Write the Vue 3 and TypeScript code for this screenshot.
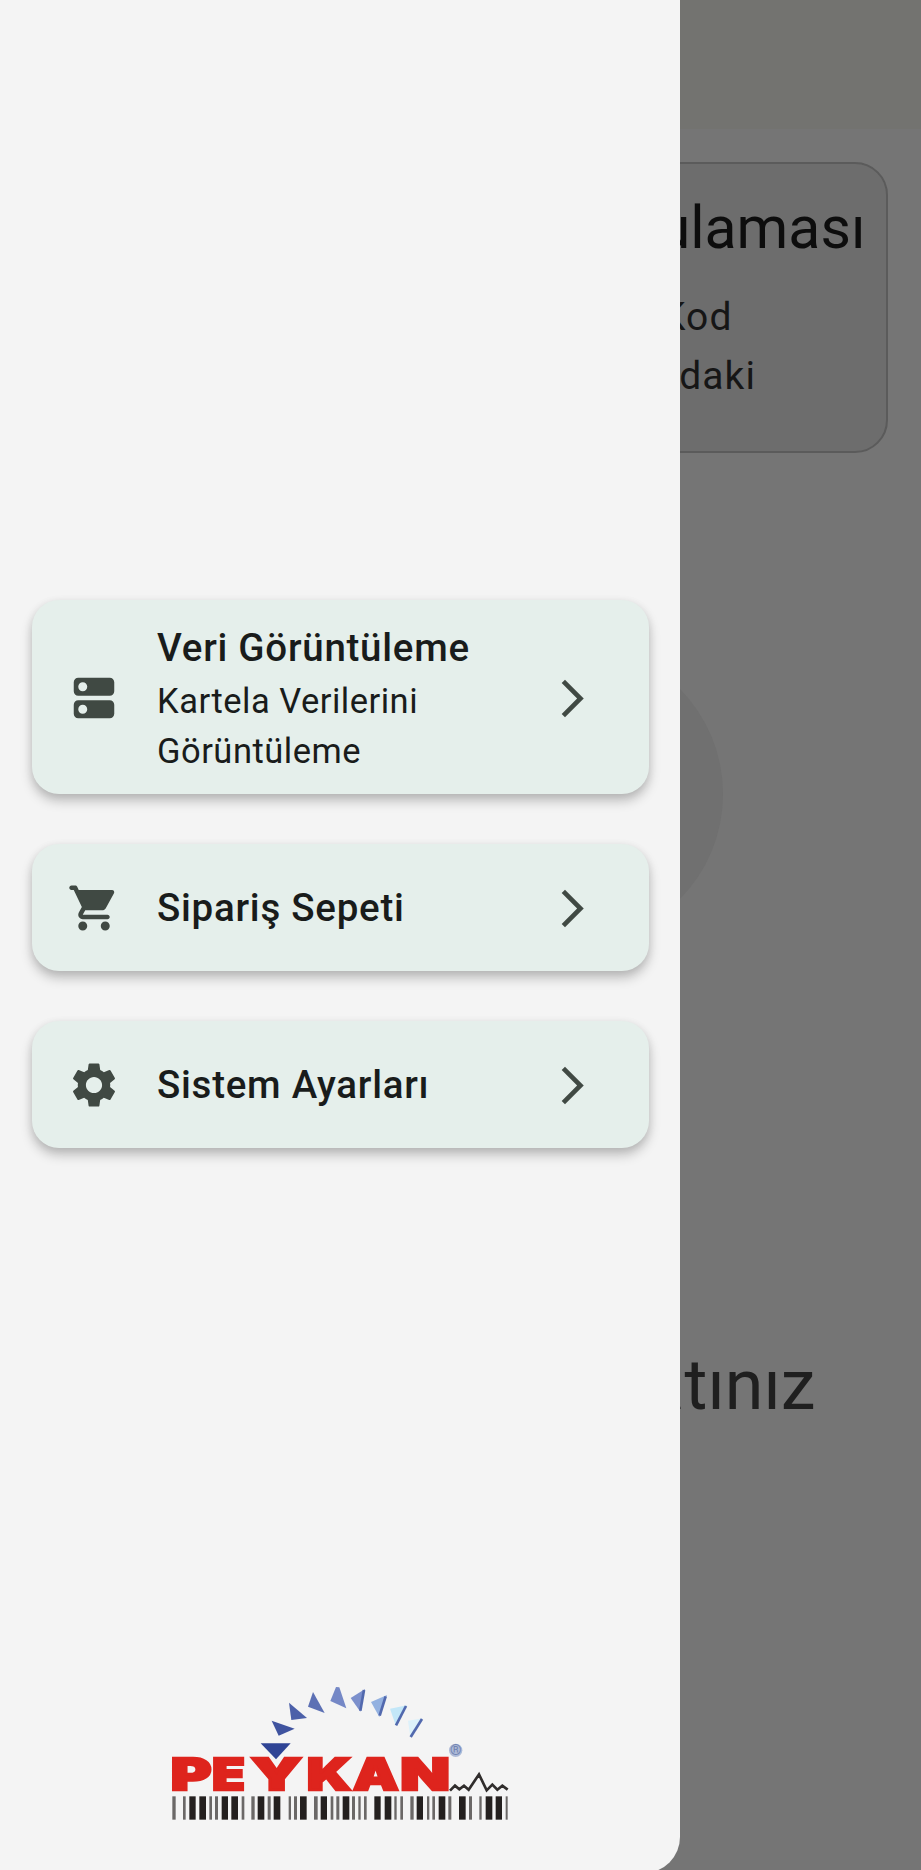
<script setup lang="ts">
interface MenuItem {
  title: string
  subtitle?: string
  icon: string
}

const items: MenuItem[] = [
  {
    title: 'Veri Görüntüleme',
    subtitle: 'Kartela Verilerini Görüntüleme',
    icon: 'M19 13H5c-1.100 0-2 .9-2 2v4c0 1.100.9 2 2 2h14c1.100 0 2-.9 2-2v-4c0-1.100-.9-2-2-2zM7 19c-1.100 0-2-.9-2-2s.9-2 2-2 2 .9 2 2-.9 2-2 2zM19 3H5c-1.100 0-2 .9-2 2v4c0 1.100.9 2 2 2h14c1.100 0 2-.9 2-2V5c0-1.100-.9-2-2-2zM7 9c-1.100 0-2-.9-2-2s.9-2 2-2 2 .9 2 2-.9 2-2 2z',
  },
  {
    title: 'Sipariş Sepeti',
    icon: 'M7 18c-1.100 0-1.990.9-1.990 2S5.900 22 7 22s2-.9 2-2-.9-2-2-2zM1 3c0 .55.45 1 1 1h1l3.600 7.590-1.350 2.440C4.520 15.370 5.480 17 7 17h11c.55 0 1-.45 1-1s-.45-1-1-1H7l1.100-2h7.450c.75 0 1.410-.41 1.750-1.030l3.580-6.490c.37-.66-.11-1.480-.87-1.480H5.210l-.67-1.430c-.16-.35-.52-.57-.9-.57H2c-.55 0-1 .45-1 1zm16 15c-1.100 0-1.990.9-1.990 2s.89 2 1.990 2 2-.9 2-2-.9-2-2-2z',
  },
  {
    title: 'Sistem Ayarları',
    icon: 'M19.140 12.940c.04-.3.060-.61.060-.94 0-.32-.02-.64-.07-.94l2.030-1.580c.18-.14.23-.41.12-.61l-1.920-3.320c-.12-.22-.37-.29-.59-.22l-2.390.96c-.5-.38-1.030-.7-1.620-.94l-.36-2.540c-.04-.24-.24-.41-.48-.41h-3.840c-.24 0-.43.17-.47.41l-.36 2.540c-.59.24-1.130.57-1.620.94l-2.390-.96c-.22-.08-.47 0-.59.22L2.740 8.870c-.12.21-.08.47.12.61l2.030 1.580c-.05.3-.09.63-.09.94s.02.64.07.94l-2.030 1.580c-.18.14-.23.41-.12.61l1.920 3.320c.12.22.37.29.59.22l2.390-.96c.5.38 1.030.7 1.620.94l.36 2.540c.05.24.24.41.48.41h3.840c.24 0 .44-.17.47-.41l.36-2.540c.59-.24 1.130-.56 1.620-.94l2.390.96c.22.08.47 0 .59-.22l1.920-3.320c.12-.22.07-.47-.12-.61l-2.010-1.580zM12 15.600c-1.980 0-3.600-1.620-3.600-3.600s1.620-3.600 3.600-3.600 3.600 1.620 3.600 3.600-1.620 3.600-3.600 3.600z',
  },
]

// Start and end of every bar in logo units
const bars: [number, number][] = [
  [37, 47], [69, 77], [88, 107], [118, 138], [148, 156], [165, 174], [185, 204], [214, 234],
  [245, 253], [274, 284], [293, 313], [323, 332], [341, 361], [386, 393], [402, 411], [420, 440],
  [462, 473], [482, 501], [512, 520], [529, 538], [548, 568], [576, 585], [595, 602], [612, 620],
  [643, 662], [674, 694], [703, 710], [721, 729], [751, 761], [770, 789], [801, 808], [817, 825],
  [836, 856], [865, 874], [897, 917], [927, 936], [958, 965], [977, 997], [1007, 1026], [1037, 1043],
]

// Each wordmark letter has its own origin and advance
const letters: { char: string; x: number; width: number }[] = [
  { char: 'P', x: 32, width: 122 },
  { char: 'E', x: 156, width: 99 },
  { char: 'Y', x: 272, width: 154 },
  { char: 'K', x: 440, width: 134 },
  { char: 'A', x: 579, width: 137 },
  { char: 'N', x: 721, width: 149 },
]

const arrows: { points: string; fill: string }[] = [
  { points: '302,218 392,218 348,266', fill: '#2f4495' },
  { points: '335,150 404,174 356,195', fill: '#3f539f' },
  { points: '387,96 441,142 394,148', fill: '#4c60a9' },
  { points: '459,64 494,127 444,108', fill: '#5c70b4' },
  { points: '528,49 538,50 559,113 511,91', fill: '#7588c6' },
  { points: '572,82 615,55 601,123', fill: '#7c90cc' },
  { points: '633,94 681,73 658,139', fill: '#93b1e0' },
  { points: '690,114 741,104 708,166', fill: '#c3e7f8' },
  { points: '744,150 788,143 751,200', fill: '#ddf1fa' },
]

const edges = ['612,58 601,120', '677,77 659,135', '738,106 708,164', '786,145 752,199']
</script>

<template>
  <div class="screen">
    <main class="page">
      <header class="appbar"></header>
      <section class="info">
        <h1>ulaması</h1>
        <p class="line-one">Kod</p>
        <p class="line-two">daki</p>
      </section>
      <div class="disc"></div>
      <p class="prompt">atınız</p>
    </main>

    <aside class="drawer">
      <nav class="menu">
        <a v-for="item in items" :key="item.title" class="card" :class="{ tall: item.subtitle }">
          <svg class="icon" viewBox="0 0 24 24"><path :d="item.icon" /></svg>
          <span class="labels">
            <span class="title">{{ item.title }}</span>
            <span v-if="item.subtitle" class="subtitle">{{ item.subtitle }}</span>
          </span>
          <svg class="chevron" viewBox="0 0 24 24">
            <path d="M6.230 20.230 8 22l10-10L8 2 6.230 3.770 14.460 12z" />
          </svg>
        </a>
      </nav>

      <svg class="logo" viewBox="30 40 1020 420">
        <polygon v-for="a in arrows" :key="a.points" :points="a.points" :fill="a.fill" />
        <polyline v-for="e in edges" :key="e" :points="e" class="edge" />
        <text
          v-for="l in letters"
          :key="l.char"
          class="brand"
          :x="l.x"
          y="357"
          :textLength="l.width"
          lengthAdjust="spacingAndGlyphs"
        >{{ l.char }}</text>
        <circle cx="887" cy="239" r="20" fill="#aebbd8" />
        <text class="mark" x="887" y="254" text-anchor="middle">®</text>
        <polyline
          class="pulse"
          points="870,360 885,345 898,356 912,345 926,357 957,311 980,359 997,342 1012,357 1027,345 1043,357"
        />
        <rect
          v-for="b in bars"
          :key="b[0]"
          :x="b[0]"
          y="377"
          :width="b[1] - b[0]"
          height="70"
          :fill="b[1] - b[0] > 14 ? '#24201f' : '#6b6867'"
        />
      </svg>
    </aside>
  </div>
</template>

<style>
body {
  margin: 0;
  background: #757575;
}
</style>

<style scoped>
.screen {
  position: relative;
  width: 921px;
  height: 1870px;
  overflow: hidden;
  background: #757575;
  font-family: Roboto, "Liberation Sans", sans-serif;
}

.page {
  display: flex;
  flex-direction: column;
  height: 1870px;
}

.appbar {
  height: 129px;
  background: #737370;
}

.info {
  box-sizing: border-box;
  height: 291px;
  margin: 33px 33px 0;
  padding: 28px 20.500px 0 0;
  border: 2px solid #5b5b5b;
  border-radius: 33px;
  background: #6d6d6d;
  text-align: right;
  color: #161616;
}

h1,
p {
  margin: 0;
  font-weight: 400;
}

h1 {
  font-size: 59px;
  line-height: 72px;
  color: #0d0d0d;
}

.line-one,
.line-two {
  font-size: 39px;
  line-height: 59px;
  letter-spacing: 1.1px;
}

.line-one {
  margin-top: 24px;
  padding-right: 133px;
}

.line-two {
  padding-right: 109.500px;
}

.disc {
  width: 300px;
  height: 300px;
  margin: 191px 0 0 423px;
  border-radius: 50%;
  background: #707070;
}

.prompt {
  margin-top: 399px;
  padding-right: 105.500px;
  font-size: 70px;
  line-height: 84px;
  text-align: right;
  color: #1f1f1f;
}

.drawer {
  position: absolute;
  top: 0;
  left: 0;
  box-sizing: border-box;
  display: flex;
  flex-direction: column;
  justify-content: space-between;
  width: 680.400px;
  height: 1873px;
  padding: 600px 31.500px 49px;
  border-radius: 0 0 36px 0;
  background: #f4f4f4;
}

.menu {
  display: flex;
  flex-direction: column;
  gap: 50.500px;
}

.card {
  box-sizing: border-box;
  display: flex;
  align-items: center;
  height: 126.500px;
  padding: 0 54px 0 35.500px;
  border-radius: 27px;
  background: #e5efeb;
  box-shadow: 0 7px 12px rgba(0, 0, 0, 0.22), 0 2px 8px rgba(0, 0, 0, 0.08);
}

.card.tall {
  height: 193.500px;
}

.icon {
  flex: none;
  width: 54px;
  height: 54px;
  margin-top: 2px;
  fill: #404943;
}

.labels {
  display: flex;
  flex: 1;
  flex-direction: column;
  margin: 2px 0 0 36px;
}

.tall .labels {
  margin-top: 5px;
}

.tall .title {
  margin: -1px 0 1.500px;
}

.title {
  font-size: 38.500px;
  font-weight: 500;
  line-height: 54px;
  letter-spacing: 0.74px;
  color: #191c1b;
}

.subtitle {
  width: 300px;
  font-size: 34.500px;
  line-height: 49.600px;
  letter-spacing: 0.5px;
  color: #191c1b;
}

.chevron {
  flex: none;
  width: 45px;
  height: 45px;
  margin-top: 3px;
  fill: #404943;
}

.logo {
  display: block;
  width: 340px;
  height: 140px;
  margin-left: 138.500px;
}

.brand {
  font-family: Inter, "DejaVu Sans", sans-serif;
  font-size: 130px;
  font-weight: 900;
  fill: #de241d;
  stroke: #de241d;
  stroke-width: 7px;
}

.mark {
  font-family: Roboto, sans-serif;
  font-size: 44px;
  fill: #7183b2;
}

.edge {
  fill: none;
  stroke: #5269ae;
  stroke-width: 8px;
}

.pulse {
  fill: none;
  stroke: #302d2c;
  stroke-width: 8px;
}
</style>
